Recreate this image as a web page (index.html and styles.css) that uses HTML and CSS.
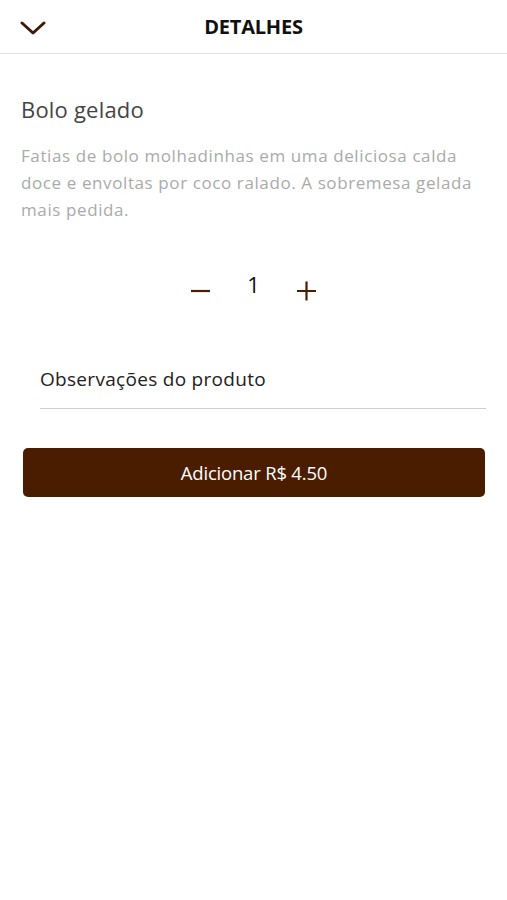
FILE: index.html
```html
<!DOCTYPE html>
<html lang="pt-BR">
<head>
    <meta charset="UTF-8">
    <meta name="viewport" content="width=device-width, initial-scale=1.0">
    <title>Detalhes</title>
    <link rel="stylesheet" href="styles.css">
</head>
<body>
    <header class="topbar">
        <button class="back-btn" aria-label="Voltar">
            <svg width="26" height="16" viewBox="0 0 26 16">
                <path d="M2 3 L13 13 L24 3" fill="none" stroke="#3b1a0a" stroke-width="3" stroke-linecap="round" stroke-linejoin="round"/>
            </svg>
        </button>
        <h1 class="topbar-title">DETALHES</h1>
    </header>

    <main class="content">
        <h2 class="product-name">Bolo gelado</h2>
        <p class="product-desc">Fatias de bolo molhadinhas em uma deliciosa calda doce e envoltas por coco ralado. A sobremesa gelada mais pedida.</p>

        <div class="qty">
            <button class="qty-btn" aria-label="Diminuir">
                <svg width="19" height="20" viewBox="0 0 19 20">
                    <path d="M0 10 H19" stroke="#4a1c00" stroke-width="2.2"/>
                </svg>
            </button>
            <span class="qty-value">1</span>
            <button class="qty-btn" aria-label="Aumentar">
                <svg width="19" height="20" viewBox="0 0 19 20">
                    <path d="M0 10 H19 M9.5 0.5 V19.5" stroke="#4a1c00" stroke-width="2.2"/>
                </svg>
            </button>
        </div>

        <div class="notes">
            <input type="text" class="notes-input" placeholder="Observações do produto">
        </div>

        <button class="add-btn">Adicionar R$ 4.50</button>
    </main>
</body>
</html>
```

FILE: styles.css
```css
body {
    font-family: "Open Sans", Arial, sans-serif;
    background: #ffffff;
    color: #222;
    margin: 0;
}
button {
    border: none;
    background: none;
    padding: 0;
    cursor: pointer;
    font-family: inherit;
}
.topbar {
    position: relative;
    height: 53px;
    border-bottom: 1px solid #e2e2e2;
    display: flex;
    align-items: center;
    justify-content: center;
}
.back-btn {
    position: absolute;
    left: 20px;
    top: 20px;
    line-height: 0;
}
.topbar-title {
    margin: 0;
    font-size: 20px;
    font-weight: 700;
    color: #111;
    letter-spacing: -0.2px;
}
.content {
    padding: 0 21px;
}
.product-name {
    margin: 40px 0 0;
    font-size: 22px;
    font-weight: 400;
    color: #444;
    line-height: 30px;
    letter-spacing: 0.2px;
}
.product-desc {
    margin: 18px 0 0;
    font-size: 17px;
    line-height: 27px;
    letter-spacing: 0.6px;
    color: #aaa;
}
.qty {
    display: flex;
    justify-content: center;
    align-items: flex-start;
    gap: 37px;
    margin-top: 48px;
}
.qty-btn {
    line-height: 0;
    margin-top: 10px;
}
.qty-value {
    font-size: 22px;
    line-height: 26px;
    color: #111;
}
.notes {
    margin: 57px 0 0;
    padding: 0 0 0 19px;
}
.notes-input {
    width: 100%;
    box-sizing: border-box;
    border: none;
    border-bottom: 1px solid #cfcfcf;
    padding: 8px 0 16px;
    font-family: inherit;
    font-size: 19px;
    line-height: 26px;
    letter-spacing: 0.3px;
    color: #222;
    outline: none;
}
.notes-input::placeholder {
    color: #222;
}
.add-btn {
    display: block;
    width: calc(100% - 3px);
    margin: 39px 0 0 2px;
    height: 49px;
    border-radius: 5px;
    background: #4a1c00;
    color: #fff;
    font-size: 18.5px;
    letter-spacing: -0.2px;
}
```
